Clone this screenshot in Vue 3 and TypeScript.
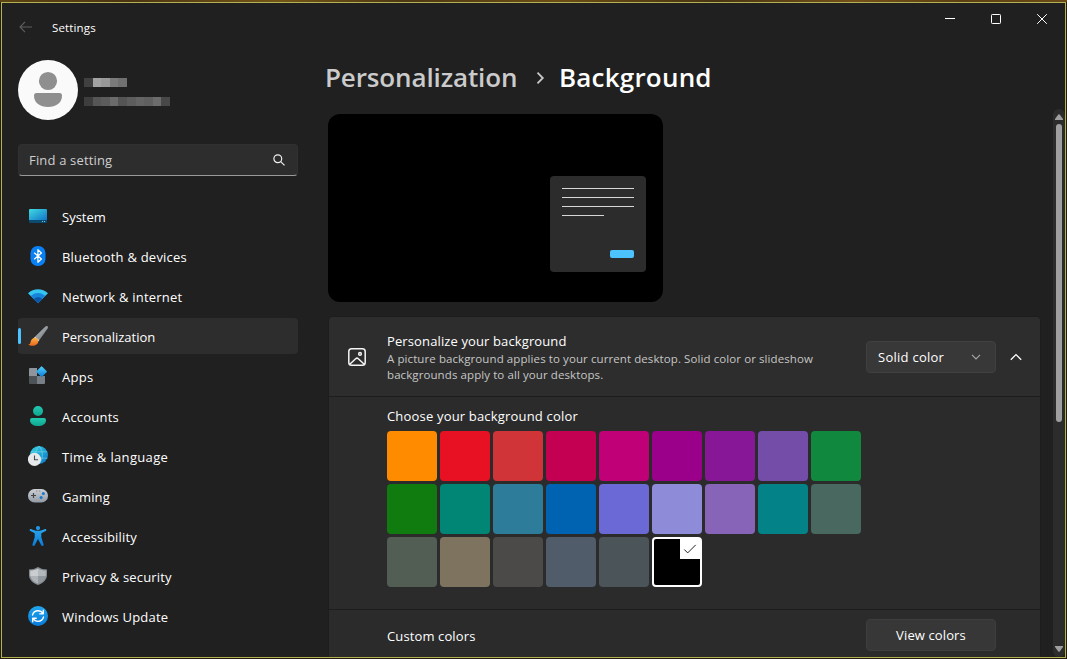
<script setup lang="ts">
import { ref } from 'vue'

interface NavItem {
  id: string
  label: string
  tracking: number
}

const navItems: NavItem[] = [
  { id: 'system', label: 'System', tracking: 0 },
  { id: 'bluetooth', label: 'Bluetooth & devices', tracking: 0.22 },
  { id: 'network', label: 'Network & internet', tracking: 0.22 },
  { id: 'personalization', label: 'Personalization', tracking: 0 },
  { id: 'apps', label: 'Apps', tracking: 0.3 },
  { id: 'accounts', label: 'Accounts', tracking: 0.2 },
  { id: 'time', label: 'Time & language', tracking: 0.34 },
  { id: 'gaming', label: 'Gaming', tracking: 0.15 },
  { id: 'accessibility', label: 'Accessibility', tracking: 0.18 },
  { id: 'privacy', label: 'Privacy & security', tracking: 0.18 },
  { id: 'update', label: 'Windows Update', tracking: 0.22 },
]
const activeNav = ref('personalization')

const colors: string[] = [
  '#ff8c00', '#e81123', '#d13438', '#c30052', '#bf0077', '#9a0089', '#881798', '#744da9', '#10893e',
  '#107c10', '#018574', '#2d7d9a', '#0063b1', '#6b69d6', '#8e8cd8', '#8764b8', '#038387', '#486860',
  '#525e54', '#7e735f', '#4c4a48', '#515c6b', '#4a5459', '#000000',
]
const selectedColor = ref('#000000')

const nameBlocks: string[] = ['#404040', '#a3a3a3', '#999999', '#7b7b7b', '#707070']
const mailBlocks: string[] = ['#3d3d3d', '#565656', '#5c5c5c', '#6b6b6b', '#545454', '#5d5d5d', '#646464', '#606060', '#6c6c6c', '#484848']
</script>

<template>
  <div class="desktop">
    <div class="window">
      <header class="titlebar">
        <svg class="back" width="14" height="12" viewBox="0 0 14 12"><path d="M6 .8 1 6l5 5.2M1 6h12" /></svg>
        <span class="app-name">Settings</span>
        <div class="controls">
          <svg width="46" height="32" viewBox="0 0 46 32"><path d="M17 15.5h10" /></svg>
          <svg width="46" height="32" viewBox="0 0 46 32"><rect x="17.5" y="11.5" width="9" height="9" rx=".8" /></svg>
          <svg width="46" height="32" viewBox="0 0 46 32"><path d="m17.2 11.2 9.6 9.6m0-9.6-9.6 9.6" /></svg>
        </div>
      </header>

      <div class="body">
        <aside class="sidebar">
          <div class="profile">
            <svg width="60" height="60" viewBox="0 0 60 60">
              <circle cx="30" cy="30" r="30" fill="#fafafa" />
              <circle cx="30" cy="21" r="9.1" fill="#8f8f8f" />
              <path d="M18.500 33h23a2.500 2.500 0 0 1 2.500 2.500c0 7.500-6 11.500-14 11.500s-14-4-14-11.500a2.500 2.500 0 0 1 2.500-2.500z" fill="#8f8f8f" />
            </svg>
            <div class="identity">
              <div class="blocks"><i v-for="(c, i) in nameBlocks" :key="i" :style="{ background: c }"></i></div>
              <div class="blocks"><i v-for="(c, i) in mailBlocks" :key="i" :style="{ background: c }"></i></div>
            </div>
          </div>

          <div class="search">
            <span>Find a setting</span>
            <svg width="14" height="14" viewBox="0 0 14 14"><circle cx="5.8" cy="5.7" r="3.9" /><path d="m8.7 8.6 3.8 3.8" /></svg>
          </div>

          <nav class="nav">
            <div v-for="item in navItems" :key="item.id" class="nav-item" :class="{ active: item.id === activeNav }" @click="activeNav = item.id">
              <svg class="nav-icon" width="20" height="20" viewBox="0 0 20 20">
                <template v-if="item.id === 'system'">
                  <defs><linearGradient id="gs" x1="0" y1="0" x2="1" y2="1"><stop stop-color="#3fdce0" /><stop offset="1" stop-color="#1273c9" /></linearGradient></defs>
                  <rect x="1" y="3" width="18" height="14" rx="1.2" fill="#0c4a70" />
                  <path d="M1 4.2A1.2 1.2 0 0 1 2.2 3h15.6A1.2 1.2 0 0 1 19 4.2V14H1z" fill="url(#gs)" />
                  <path d="M14 15h1v1h-1zm2 0h1v1h-1z" fill="#68c4e8" />
                </template>
                <template v-else-if="item.id === 'bluetooth'">
                  <rect x="2.5" y="0" width="15" height="20" rx="7.2" fill="#0a80f5" />
                  <path d="m6.2 6.7 7.2 6.3-3.5 3.3V3.7L13.4 7l-7.2 6.3" fill="none" stroke="#fff" stroke-width="1.25" stroke-linejoin="round" />
                </template>
                <template v-else-if="item.id === 'network'">
                  <path d="M0 7.3C5.4 1.9 14.6 1.9 20 7.3L17.2 10 10 17.2 2.8 10z" fill="#35c5f1" />
                  <path d="M2.8 10C6.8 6 13.2 6 17.2 10L10 17.2z" fill="#1684d8" />
                  <path d="M5.7 12.9c2.4-2.3 6.2-2.3 8.6 0L10 17.2z" fill="#0c56a6" />
                </template>
                <template v-else-if="item.id === 'personalization'">
                  <defs>
                    <linearGradient id="gp" x1="0" y1="0" x2="1" y2="1"><stop stop-color="#c3c8cc" /><stop offset="1" stop-color="#656c72" /></linearGradient>
                    <linearGradient id="gb" x1="0" y1="0" x2="0" y2="1"><stop stop-color="#ffb344" /><stop offset="1" stop-color="#e9631b" /></linearGradient>
                  </defs>
                  <path d="M19.5.3c.7.6.4 1.7-.4 3L11.4 14 7.2 10.600 16.400 1.500C17.600.4 18.800-.2 19.500.3z" fill="url(#gp)" />
                  <path d="m7.2 10.600 4.200 3.400-1.100 1.500-4.500-3.600z" fill="#d9d9d6" />
                  <path d="M9.300 12.800c1.900 2.200.7 5.400-2 6.500-2.300.9-5.300.8-7-.8 1.600-.2 2-1.100 2.300-2.600.5-3.200 4.400-5.400 6.700-3.100z" fill="url(#gb)" />
                </template>
                <template v-else-if="item.id === 'apps'">
                  <defs>
                    <linearGradient id="ga" x1="0" y1="0" x2="1" y2="1"><stop stop-color="#55d3fb" /><stop offset="1" stop-color="#087bd9" /></linearGradient>
                  </defs>
                  <path d="M2 2h7v8H1V3a1 1 0 0 1 1-1z" fill="#8f959c" />
                  <path d="M1 10h8v8H2a1 1 0 0 1-1-1z" fill="#4e5358" />
                  <path d="M9 10h8v7a1 1 0 0 1-1 1H9z" fill="#787f86" />
                  <rect x="9.6" y="1.6" width="8" height="8" rx="1" transform="rotate(45 13.6 5.6)" fill="url(#ga)" />
                </template>
                <template v-else-if="item.id === 'accounts'">
                  <defs><linearGradient id="gc" x1="0" y1="0" x2="0" y2="1"><stop stop-color="#23c9b0" /><stop offset="1" stop-color="#0fa48f" /></linearGradient></defs>
                  <circle cx="10" cy="5" r="5" fill="url(#gc)" />
                  <path d="M4 12h12a2 2 0 0 1 2 2c0 4-3.6 6-8 6s-8-2-8-6a2 2 0 0 1 2-2z" fill="url(#gc)" />
                </template>
                <template v-else-if="item.id === 'time'">
                  <defs><linearGradient id="gt" x1="0" y1="0" x2="1" y2="1"><stop stop-color="#39d5e2" /><stop offset="1" stop-color="#0873c4" /></linearGradient></defs>
                  <circle cx="11" cy="9" r="9" fill="url(#gt)" />
                  <path d="M3 5.8h16M2.3 12.2h17.2M11 0C6.4 5 6.4 13 11 18M11 0c4.6 5 4.6 13 0 18" fill="none" stroke="#8de3f2" stroke-opacity=".55" stroke-width=".9" />
                  <circle cx="6.5" cy="13.3" r="6.6" fill="#e7e8ea" />
                  <path d="M6.500 9.400v4.300H10" fill="none" stroke="#45494d" stroke-width="1.100" />
                </template>
                <template v-else-if="item.id === 'gaming'">
                  <defs><linearGradient id="gg" x1="0" y1="0" x2="0" y2="1"><stop stop-color="#ced1d6" /><stop offset="1" stop-color="#929aa4" /></linearGradient></defs>
                  <rect x="0" y="3" width="20" height="13.5" rx="6.6" fill="url(#gg)" />
                  <path d="M5.5 7v5M3 9.5h5" stroke="#42464a" stroke-width="1.2" />
                  <circle cx="15.4" cy="7.6" r="1.5" fill="#1677cd" /><circle cx="13.1" cy="11.4" r="1.5" fill="#1677cd" />
                  <path d="M8.3 4.5h1v1h-1zm3 0h1v1h-1z" fill="#60666d" />
                </template>
                <template v-else-if="item.id === 'accessibility'">
                  <defs><linearGradient id="gx" x1="0" y1="0" x2="0" y2="1"><stop stop-color="#2ba5ed" /><stop offset="1" stop-color="#087bd7" /></linearGradient></defs>
                  <circle cx="10" cy="2.1" r="2.1" fill="#209ae8" />
                  <path d="M3.1 3C5.4 4 7 4.8 10 4.8S14.600 4 16.900 3c1.400-.6 2 1.300.8 1.900L13.300 7.200v4L15.500 18.300c.4 1.500-1.700 2.300-2.400.8L10 12.900 6.900 19.100c-.7 1.500-2.800.7-2.400-.8L6.700 11.200v-4L2.300 4.900C1.100 4.300 1.700 2.400 3.100 3z" fill="url(#gx)" />
                </template>
                <template v-else-if="item.id === 'privacy'">
                  <path d="M10 1c2.700 1.700 5.500 2.500 9 2.500V9c0 4.500-3.500 8-9 10-5.500-2-9-5.500-9-10V3.500C4.500 3.500 7.300 2.700 10 1z" fill="#858b91" />
                  <path d="M10 2.400c2.400 1.400 5 2.100 7.800 2.200V9c0 .4 0 .7-.1 1H10z" fill="#b3b8bc" />
                  <path d="M10 2.400C7.600 3.800 5 4.500 2.200 4.600V9c0 .4 0 .7.1 1H10z" fill="#c9cdd0" />
                  <path d="M10 10v7.700c-4.400-1.700-7.100-4.400-7.700-7.700z" fill="#aeb3b8" />
                  <path d="M10 10v7.700c4.400-1.700 7.100-4.400 7.700-7.700z" fill="#939a9f" />
                </template>
                <template v-else>
                  <defs><linearGradient id="gu" x1="0" y1="0" x2="0" y2="1"><stop stop-color="#22a6ee" /><stop offset="1" stop-color="#087bd9" /></linearGradient></defs>
                  <circle cx="10" cy="10" r="10" fill="url(#gu)" />
                  <path d="M4.500 9C5.200 6.200 7.400 4.700 10 4.700c2.100 0 3.800 1 4.900 2.700M15.300 4.200v3.600h-3.600M15.500 11c-.7 2.800-2.900 4.300-5.500 4.300-2.100 0-3.800-1-4.900-2.700M4.700 15.800v-3.600h3.600" fill="none" stroke="#fff" stroke-width="1.35" stroke-linecap="round" stroke-linejoin="round" />
                </template>
              </svg>
              <span :style="{ letterSpacing: item.tracking + 'px' }">{{ item.label }}</span>
            </div>
          </nav>
        </aside>

        <main class="main">
          <h1 class="crumbs">
            <span class="parent">Personalization</span>
            <svg width="9" height="14" viewBox="0 0 9 14"><path d="m1.500 1.700 5.300 5.300-5.300 5.300" /></svg>
            <span class="current">Background</span>
          </h1>

          <div class="scroll-area">
            <div class="content">
              <div class="preview">
                <div class="dialog">
                  <i class="line"></i><i class="line"></i><i class="line"></i><i class="line short"></i>
                  <i class="button"></i>
                </div>
              </div>

              <section class="panel">
                <div class="row head">
                  <svg class="picture" width="20" height="20" viewBox="0 0 20 20">
                    <rect x="1.800" y="1.800" width="16.400" height="16.400" rx="2.800" />
                    <path d="m3 17 5.700-5.300a1.900 1.900 0 0 1 2.600 0L17 17" />
                    <circle cx="13" cy="6.900" r="1.300" />
                  </svg>
                  <div class="desc">
                    <div class="title">Personalize your background</div>
                    <div class="caption">A picture background applies to your current desktop. Solid color or slideshow<br />backgrounds apply to all your desktops.</div>
                  </div>
                  <div class="select">
                    <span>Solid color</span>
                    <svg width="10" height="6" viewBox="0 0 10 6"><path d="m1 .9 4 4 4-4" /></svg>
                  </div>
                  <svg class="collapse" width="12" height="8" viewBox="0 0 12 8"><path d="m.8 6.800 5.200-5.200 5.200 5.200" /></svg>
                </div>

                <div class="row palette">
                  <div class="title choose">Choose your background color</div>
                  <div class="grid">
                    <div v-for="c in colors" :key="c" class="swatch" :class="{ selected: c === selectedColor }" :style="{ backgroundColor: c }" @click="selectedColor = c">
                      <svg v-if="c === selectedColor" width="20" height="20" viewBox="0 0 20 20"><path d="m4.300 10.500 3.400 3.400 8-8" /></svg>
                    </div>
                  </div>
                </div>

                <div class="row custom">
                  <span class="title">Custom colors</span>
                  <div class="view">View colors</div>
                </div>
              </section>
            </div>

            <div class="scrollbar">
              <svg width="8" height="6" viewBox="0 0 8 6"><path d="M3.300.6a.9.9 0 0 1 1.400 0L8 5v1H0V5z" /></svg>
              <i class="thumb"></i>
              <svg class="down" width="8" height="6" viewBox="0 0 8 6"><path d="M3.300 5.400a.9.9 0 0 0 1.400 0L8 1V0H0v1z" /></svg>
            </div>
          </div>
        </main>
      </div>
    </div>
  </div>
</template>

<style>
html, body { overflow: hidden; }
</style>

<style scoped>
* { box-sizing: border-box; }
.desktop {
  width: 1067px;
  height: 659px;
  padding: 2px 1px 1px;
  background: linear-gradient(90deg, #5c4313, #4b3414 12%, #735517 26%, #4d3815 38%, #6b4d15 52%, #483515 67%, #73501a 80%, #5c4013 90%, #6a4a17) 0 0 / 100% 2px no-repeat, #241b0d;
  font-family: "Open Sans", "Noto Sans", sans-serif;
  font-size: 13px;
  line-height: 20px;
  color: #fff;
}
svg { display: block; flex: none; }
.window {
  display: flex;
  flex-direction: column;
  height: 656px;
  border: 1px solid #b3b152;
  background: #202020;
  overflow: hidden;
}
.titlebar { display: flex; align-items: flex-start; height: 45px; flex: none; padding-left: 17px; }
.back { margin-top: 18px; fill: none; stroke: #5f5f5f; stroke-width: 1.1; }
.app-name { margin: 15px auto 0 19px; font-size: 11.5px; letter-spacing: 0.15px; }
.controls { display: flex; margin-right: -1px; }
.controls svg { fill: none; stroke: #fff; stroke-width: 1; }
.body { display: flex; flex: 1; min-height: 0; }

.sidebar { flex: none; width: 280px; margin-left: 16px; padding-top: 12px; }
.profile { display: flex; gap: 6px; }
.identity { display: flex; flex-direction: column; gap: 10px; padding-top: 18px; }
.blocks { display: flex; height: 9px; }
.blocks i { width: 8.6px; }
.search {
  display: flex;
  align-items: center;
  justify-content: space-between;
  height: 32px;
  margin-top: 24px;
  padding: 0 11px 0 10px;
  border: 1px solid #303030;
  border-bottom-color: #9a9a9a;
  border-radius: 4px;
  background: #2d2d2d;
  color: #cfcfcf;
  letter-spacing: 0.17px;
}
.search svg { fill: none; stroke: #f0f0f0; stroke-width: 1.2; }
.nav { display: flex; flex-direction: column; gap: 4px; margin-top: 22px; }
.nav-item {
  display: flex;
  align-items: center;
  gap: 14px;
  height: 36px;
  padding: 2px 0 0 10px;
  border-radius: 4px;
  position: relative;
}
.nav-icon { margin-top: -2px; }
.nav-item.active { background: #2d2d2d; }
.nav-item.active::before {
  content: "";
  position: absolute;
  left: 0;
  top: 10px;
  width: 3px;
  height: 16px;
  border-radius: 1.5px;
  background: #4cc2ff;
}

.main { display: flex; flex-direction: column; flex: 1; min-width: 0; margin-left: 27px; }
.crumbs {
  display: flex;
  align-items: center;
  height: 36px;
  margin: 11px 0 0;
  font-size: 26px;
  line-height: 36px;
  font-weight: 600;
}
.crumbs .parent { width: 192px; color: #cbcbcb; letter-spacing: -0.13px; white-space: nowrap; }
.crumbs .current { letter-spacing: 0.2px; }
.crumbs svg { margin: 1px 14px 0 19px; fill: none; stroke: #c8c8c8; stroke-width: 1.8; }
.scroll-area { display: flex; flex: 1; min-height: 0; margin-top: 14px; justify-content: space-between; }
.content { padding: 5px 0 0 3px; width: 716px; overflow: hidden; }
.preview {
  display: flex;
  justify-content: flex-end;
  align-items: flex-end;
  width: 335px;
  height: 188px;
  padding: 0 17px 30px 0;
  border-radius: 12px;
  background: #000;
}
.dialog {
  display: flex;
  flex-direction: column;
  gap: 8px;
  width: 96px;
  height: 96px;
  padding: 12px 12px 14px;
  border-radius: 4px;
  background: #2c2c2c;
}
.line { height: 1px; background: #d6d6d6; }
.line.short { width: 42px; }
.button { width: 24px; height: 8px; margin: auto 0 0 auto; border-radius: 2px; background: #4cc2ff; }

.panel { width: 713px; height: 360px; margin-top: 14px; border: 1px solid #1d1d1d; border-radius: 5px; background: #2b2b2b; }
.row { border-bottom: 1px solid #1d1d1d; }
.head { display: flex; align-items: center; height: 80px; padding: 0 18px; border-radius: 4px 4px 0 0; background: #2d2d2d; }
.picture { fill: none; stroke: #f5f5f5; stroke-width: 1.5; }
.desc { margin: 1px auto 0 20px; }
.title { line-height: 20px; letter-spacing: 0.12px; }
.choose { letter-spacing: 0.18px; }
.caption { font-size: 11.5px; line-height: 16px; letter-spacing: 0.09px; color: #c6c6c6; white-space: nowrap; }
.select {
  display: flex;
  align-items: center;
  justify-content: space-between;
  width: 130px;
  height: 32px;
  margin-top: 1px;
  padding: 0 14px 0 11px;
  border: 1px solid #404040;
  border-radius: 4px;
  background: #383838;
  letter-spacing: 0.26px;
}
.select svg { fill: none; stroke: #aaa; stroke-width: 1.1; }
.collapse { margin-left: 14px; fill: none; stroke: #fff; stroke-width: 1.3; }
.palette { height: 213px; padding: 9px 0 0 58px; }
.grid { display: grid; grid-template-columns: repeat(9, 50px); gap: 3px; margin-top: 5px; }
.swatch { height: 50px; border-radius: 4px; }
.swatch.selected { border: 2px solid #fff; }
.swatch svg { margin-left: auto; background: #fff; fill: none; stroke: #222; stroke-width: 1; }
.custom { display: flex; justify-content: space-between; padding: 9px 44px 0 58px; border: 0; }
.custom .title { margin-top: 7px; }
.view {
  width: 130px;
  height: 32px;
  border: 1px solid #3e3e3e;
  border-radius: 4px;
  background: #373737;
  line-height: 31px;
  letter-spacing: 0.12px;
  text-align: center;
}
.scrollbar {
  display: flex;
  flex-direction: column;
  align-items: center;
  width: 12px;
  padding: 5px 0;
  border-radius: 6px;
  background: #2c2c2c;
}
.scrollbar svg { fill: #9f9f9f; }
.thumb { width: 6px; height: 298px; margin-top: 4px; border-radius: 3px; background: #9f9f9f; }
.down { margin-top: auto; }
</style>
